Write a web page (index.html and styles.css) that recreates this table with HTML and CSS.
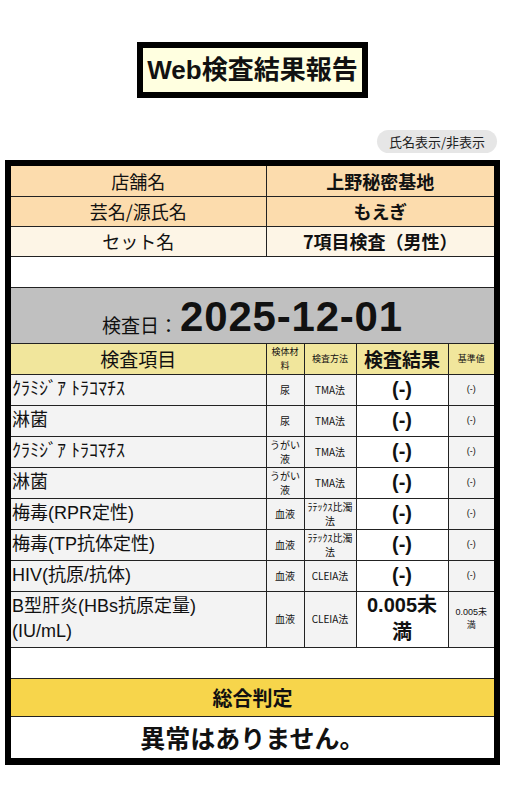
FILE: index.html
```html
<!DOCTYPE html>
<html lang="ja">
<head>
<meta charset="utf-8">
<title>Web検査結果報告</title>
<link rel="stylesheet" href="styles.css">
</head>
<body>
<div class="title-wrap"><h1 class="title">Web検査結果報告</h1></div>
<div class="toggle-row"><button class="toggle">氏名表示/非表示</button></div>
<div class="report">
  <table class="info">
    <tr class="peach"><td class="c-left">店舗名</td><td class="c-right b">上野秘密基地</td></tr>
    <tr class="peach"><td class="c-left">芸名/源氏名</td><td class="c-right b">もえぎ</td></tr>
    <tr class="cream"><td class="c-left">セット名</td><td class="c-right b">7項目検査（男性）</td></tr>
  </table>
  <div class="blank"></div>
  <div class="date"><span class="date-label">検査日：</span><span class="date-value">2025-12-01</span></div>
  <table class="items">
    <colgroup><col class="w-item"><col class="w-mat"><col class="w-meth"><col class="w-res"><col class="w-ref"></colgroup>
    <tr class="head">
      <td class="h-item">検査項目</td>
      <td class="h-small">検体材<br>料</td>
      <td class="h-small">検査方法</td>
      <td class="h-res">検査結果</td>
      <td class="h-small">基準値</td>
    </tr>
    <tr><td class="item">ｸﾗﾐｼﾞｱ ﾄﾗｺﾏﾁｽ</td><td class="sm">尿</td><td class="sm">TMA法</td><td class="res">(-)</td><td class="ref">(-)</td></tr>
    <tr><td class="item">淋菌</td><td class="sm">尿</td><td class="sm">TMA法</td><td class="res">(-)</td><td class="ref">(-)</td></tr>
    <tr><td class="item">ｸﾗﾐｼﾞｱ ﾄﾗｺﾏﾁｽ</td><td class="sm">うがい<br>液</td><td class="sm">TMA法</td><td class="res">(-)</td><td class="ref">(-)</td></tr>
    <tr><td class="item">淋菌</td><td class="sm">うがい<br>液</td><td class="sm">TMA法</td><td class="res">(-)</td><td class="ref">(-)</td></tr>
    <tr><td class="item">梅毒(RPR定性)</td><td class="sm">血液</td><td class="sm">ﾗﾃｯｸｽ比濁<br>法</td><td class="res">(-)</td><td class="ref">(-)</td></tr>
    <tr><td class="item">梅毒(TP抗体定性)</td><td class="sm">血液</td><td class="sm">ﾗﾃｯｸｽ比濁<br>法</td><td class="res">(-)</td><td class="ref">(-)</td></tr>
    <tr><td class="item">HIV(抗原/抗体)</td><td class="sm">血液</td><td class="sm">CLEIA法</td><td class="res">(-)</td><td class="ref">(-)</td></tr>
    <tr class="tall"><td class="item">B型肝炎(HBs抗原定量)<br>(IU/mL)</td><td class="sm">血液</td><td class="sm">CLEIA法</td><td class="res">0.005未<br>満</td><td class="ref">0.005未<br>満</td></tr>
  </table>
  <div class="blank"></div>
  <div class="verdict-head">総合判定</div>
  <div class="verdict">異常はありません。</div>
</div>
</body>
</html>
```

FILE: styles.css
```css
* { box-sizing: border-box; }
html, body { margin: 0; padding: 0; background: #fff; }
body {
  font-family: "Noto Sans CJK JP", "Noto Sans", sans-serif;
  color: #111;
  width: 505px;
}
.title-wrap {
  display: flex;
  justify-content: center;
  padding-top: 42px;
}
.title {
  margin: 0;
  width: 231px;
  height: 56px;
  border: 6px solid #000;
  background: #ffffe0;
  font-family: "Liberation Sans", "Noto Sans CJK JP", sans-serif;
  font-size: 26px;
  font-weight: 700;
  display: flex;
  align-items: center;
  justify-content: center;
  line-height: 1;
}
.toggle-row {
  display: flex;
  justify-content: flex-end;
  padding: 32px 8px 7px 0;
}
.toggle {
  width: 120px;
  height: 23px;
  border: none;
  border-radius: 12px;
  background: #e6e6e6;
  font-family: inherit;
  font-size: 13px;
  color: #222;
  padding: 0;
}
.report {
  margin: 0 5px;
  border: 6px solid #000;
  border-bottom-width: 7px;
}
table { border-collapse: collapse; width: 100%; table-layout: fixed; }
td { border: 1px solid #222; padding: 0; text-align: center; }
.info td { height: 30px; font-size: 18px; }
.info tr:first-child td { border-top: none; }
.info td.c-left { width: 255px; border-left: none; }
.info td.c-right { border-right: none; }
.info .b { font-weight: 700; }
.peach td { background: #fcdcad; }
.cream td { background: #fdf5e6; }
.blank { height: 31px; background: #fff; border-bottom: 1px solid #222; }
.date {
  height: 55px;
  background: #c0c0c0;
  display: flex;
  align-items: flex-end;
  justify-content: center;
  padding-bottom: 5px;
  line-height: 1;
}
.date-label { font-size: 19px; margin-right: 2px; padding-bottom: 4px; }
.date-value { font-size: 42px; font-weight: 700; font-family: "Liberation Sans", "Noto Sans", sans-serif; letter-spacing: 0.8px; }
.w-item { width: 255px; }
.w-mat { width: 38px; }
.w-meth { width: 52px; }
.w-res { width: 92px; }
.w-ref { width: 46px; }
.items td { height: 31px; background: #f3f3f3; }
.items td:first-child { border-left: none; }
.items td:last-child { border-right: none; }
.items tr.head td { background: #f1e69c; height: 31px; }
.items .h-item { font-size: 19px; }
.items .h-small { font-size: 9px; line-height: 1.45; }
.items .h-res { font-size: 19px; font-weight: 700; }
.items td.item { text-align: left; font-size: 18px; padding-left: 1px; line-height: 1.4; font-family: "Liberation Sans", "Noto Sans CJK JP", sans-serif; }
.items td.sm { font-size: 10px; line-height: 1.4; }
.items td.res { background: #fff; font-size: 20px; font-weight: 700; font-family: "Liberation Sans", "Noto Sans CJK JP", sans-serif; }
.items td.ref { font-size: 9px; font-family: "Liberation Sans", "Noto Sans CJK JP", sans-serif; line-height: 1.4; }
.items tr.tall td { height: 56px; }
.items tr.tall td.res { font-size: 20px; line-height: 1.35; }
.verdict-head {
  height: 38px;
  background: #f7d54b;
  border-bottom: 1px solid #222;
  font-size: 20px;
  font-weight: 700;
  display: flex;
  align-items: center;
  justify-content: center;
}
.verdict {
  height: 41px;
  background: #fff;
  font-size: 25px;
  font-weight: 700;
  display: flex;
  align-items: center;
  justify-content: center;
}
```
